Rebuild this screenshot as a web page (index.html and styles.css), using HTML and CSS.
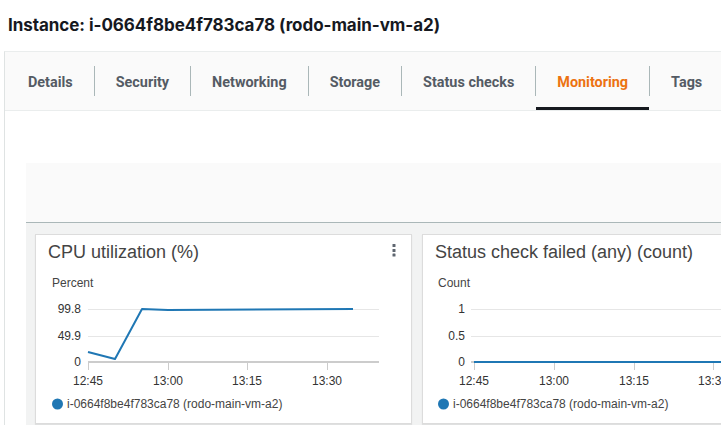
FILE: index.html
```html
<!DOCTYPE html>
<html lang="en">
<head>
<meta charset="utf-8">
<title>Instance monitoring</title>
<link rel="stylesheet" href="styles.css">
</head>
<body>
<div class="page">
  <h1 class="page-title">Instance: i-0664f8be4f783ca78 (rodo-main-vm-a2)</h1>
  <div class="tabs-box">
    <nav class="tab-bar">
      <div class="tab first"><span class="tab-label">Details</span></div>
      <div class="tab"><span class="tab-label">Security</span></div>
      <div class="tab"><span class="tab-label">Networking</span></div>
      <div class="tab"><span class="tab-label">Storage</span></div>
      <div class="tab"><span class="tab-label">Status checks</span></div>
      <div class="tab active"><span class="tab-label">Monitoring</span></div>
      <div class="tab"><span class="tab-label">Tags</span></div>
    </nav>
    <div class="tab-content">
      <div class="toolbar-panel"></div>
      <div class="widgets">
        <section class="widget">
          <header class="widget-head">
            <h2 class="widget-title">CPU utilization (%)</h2>
            <svg class="menu-icon" width="4" height="13" viewBox="0 0 4 13"><rect x="0.5" y="0" width="3" height="3" rx="0.6"/><rect x="0.5" y="5" width="3" height="3" rx="0.6"/><rect x="0.5" y="9.5" width="3" height="3" rx="0.6"/></svg>
          </header>
          <svg class="chart" width="375" height="159" viewBox="0 0 375 159">
            <text class="unit" x="16" y="24">Percent</text>
            <line class="grid" x1="52" y1="46.5" x2="343" y2="46.5"/>
            <line class="grid" x1="52" y1="73.5" x2="343" y2="73.5"/>
            <line class="axis" x1="52" y1="99" x2="343" y2="99"/>
            <text class="ylab" x="45" y="50">99.8</text>
            <text class="ylab" x="45" y="77">49.9</text>
            <text class="ylab" x="45" y="103">0</text>
            <line class="tick" x1="52.5" y1="99" x2="52.5" y2="107"/>
            <line class="tick" x1="132.5" y1="99" x2="132.5" y2="107"/>
            <line class="tick" x1="211.5" y1="99" x2="211.5" y2="107"/>
            <line class="tick" x1="291.5" y1="99" x2="291.5" y2="107"/>
            <text class="xlab" x="52" y="122">12:45</text>
            <text class="xlab" x="132" y="122">13:00</text>
            <text class="xlab" x="211" y="122">13:15</text>
            <text class="xlab" x="291" y="122">13:30</text>
            <polyline class="series" points="52,89 79,96 106,46 132,47 317,46"/>
            <circle class="legend-dot" cx="21.5" cy="141" r="5.5"/>
            <text class="legend" x="31" y="145">i-0664f8be4f783ca78 (rodo-main-vm-a2)</text>
          </svg>
        </section>
        <section class="widget">
          <header class="widget-head">
            <h2 class="widget-title">Status check failed (any) (count)</h2>
          </header>
          <svg class="chart" width="375" height="159" viewBox="0 0 375 159">
            <text class="unit" x="15" y="24">Count</text>
            <line class="grid" x1="48" y1="46.5" x2="375" y2="46.5"/>
            <line class="grid" x1="48" y1="73.5" x2="375" y2="73.5"/>
            <line class="axis" x1="48" y1="99" x2="375" y2="99"/>
            <text class="ylab" x="42" y="50">1</text>
            <text class="ylab" x="42" y="77">0.5</text>
            <text class="ylab" x="42" y="103">0</text>
            <line class="tick" x1="51.5" y1="99" x2="51.5" y2="107"/>
            <line class="tick" x1="131.5" y1="99" x2="131.5" y2="107"/>
            <line class="tick" x1="211.5" y1="99" x2="211.5" y2="107"/>
            <line class="tick" x1="290.5" y1="99" x2="290.5" y2="107"/>
            <text class="xlab" x="51" y="122">12:45</text>
            <text class="xlab" x="131" y="122">13:00</text>
            <text class="xlab" x="211" y="122">13:15</text>
            <text class="xlab" x="290" y="122">13:30</text>
            <polyline class="series" points="51,99 375,99"/>
            <circle class="legend-dot" cx="20.5" cy="141" r="5.5"/>
            <text class="legend" x="30" y="145">i-0664f8be4f783ca78 (rodo-main-vm-a2)</text>
          </svg>
        </section>
      </div>
    </div>
  </div>
</div>
</body>
</html>
```
FILE: styles.css
```css
html, body {
  margin: 0;
  padding: 0;
  background: #ffffff;
  overflow: hidden;
}

.page {
  width: 900px;
  padding-top: 15px;
}

.page-title {
  margin: 0 0 0 8px;
  font: 700 17px/20px "Inter", "Noto Sans", sans-serif;
  color: #16191f;
  letter-spacing: -0.05px;
}

.tabs-box {
  margin: 16px 0 0 4px;
  border-top: 1px solid #eaeded;
  border-left: 1px solid #dfe3e3;
  background: #ffffff;
}

.tab-bar {
  display: flex;
  height: 58px;
  padding-left: 1px;
  background: #fafafa;
  border-bottom: 1px solid #eaeded;
}

.tab {
  position: relative;
  display: flex;
  align-items: center;
}

.tab-label {
  display: block;
  padding: 4px 21px 0;
  border-left: 1px solid #aab7b8;
  font: 700 14.4px/26px "Roboto", "Liberation Sans", sans-serif;
  color: #545b64;
}

.tab.first .tab-label {
  border-left-color: transparent;
}

.tab.active .tab-label {
  color: #ec7211;
}

.tab.active::after {
  content: "";
  position: absolute;
  left: 1px;
  right: 0;
  bottom: 0;
  height: 3px;
  background: #16191f;
}

.tab-content {
  padding: 52px 0 0 21px;
}

.toolbar-panel {
  height: 59px;
  background: #fafafa;
  border-bottom: 1px solid #aab7b8;
}

.widgets {
  display: flex;
  gap: 10px;
  padding: 11px 0 0 9px;
  background: #f2f3f3;
  height: 200px;
}

.widget {
  flex: 0 0 auto;
  width: 375px;
  height: 188px;
  background: #ffffff;
  border: 1px solid #dcdcdc;
  box-shadow: 0 1px 1px rgba(0, 0, 0, 0.08);
  display: flex;
  flex-direction: column;
}

.widget-head {
  display: flex;
  justify-content: space-between;
  align-items: flex-start;
  padding: 7px 15px 0 12px;
  height: 21px;
}

.widget-title {
  margin: 0;
  font: 400 18px/21px "Liberation Sans", Arial, sans-serif;
  color: #444444;
  white-space: nowrap;
}

.menu-icon {
  margin-top: 2px;
  fill: #5f6670;
}

.chart {
  display: block;
  font-family: "Liberation Sans", Arial, sans-serif;
  font-size: 12px;
}

.chart .unit {
  fill: #444444;
}

.chart .ylab {
  fill: #333333;
  text-anchor: end;
}

.chart .xlab {
  fill: #333333;
  text-anchor: middle;
}

.chart .grid {
  stroke: #e6e6e6;
  stroke-width: 1;
}

.chart .axis {
  stroke: #cccccc;
  stroke-width: 2;
}

.chart .tick {
  stroke: #cccccc;
  stroke-width: 1;
}

.chart .series {
  fill: none;
  stroke: #1f77b4;
  stroke-width: 2;
  stroke-linejoin: round;
}

.chart .legend-dot {
  fill: #1f77b4;
}

.chart .legend {
  fill: #444444;
}
```
